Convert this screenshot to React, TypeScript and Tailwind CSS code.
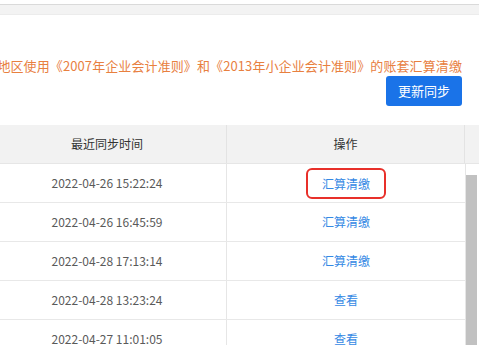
import React from "react";

const rows = [
  { time: "2022-04-26 15:22:24", action: "汇算清缴", marked: true },
  { time: "2022-04-26 16:45:59", action: "汇算清缴", marked: false },
  { time: "2022-04-28 17:13:14", action: "汇算清缴", marked: false },
  { time: "2022-04-28 13:23:24", action: "查看", marked: false },
  { time: "2022-04-27 11:01:05", action: "查看", marked: false },
];

export default function App() {
  return (
    <div
      className="w-[479px] h-[345px] overflow-hidden bg-white flex flex-col"
      style={{ fontFamily: '"Noto Sans CJK SC", "Noto Sans", sans-serif' }}
    >
      <div className="h-[4px] shrink-0 bg-white" />
      <div className="h-[11px] shrink-0 bg-[#f3f3f3] border-t border-[#dadada] border-b border-b-[#ececec]" />

      {/* notice */}
      <div className="flex flex-col shrink-0 pr-[17px]">
        <div className="mt-[42px] h-[18px] flex justify-end overflow-hidden whitespace-nowrap text-[13px] leading-[18px] tracking-[0.1px] text-[#e8803f]">
          <span>仅支持地区使用《2007年企业会计准则》和《2013年小企业会计准则》的账套汇算清缴</span>
        </div>
        <div className="flex justify-end mt-[1px]">
          <button className="w-[76px] h-[30px] rounded-[3px] bg-[#1a73e8] text-white text-[13px]">
            更新同步
          </button>
        </div>
      </div>

      {/* table */}
      <div className="mt-[19px] flex flex-col flex-1 min-h-0">
        <div className="flex h-[39px] shrink-0 bg-[#f2f2f2] border-b border-[#e6e6e6] text-[12px] text-[#333]">
          <div className="w-[227px] pr-[12px] flex items-center justify-center border-r border-[#e3e3e3]">最近同步时间</div>
          <div className="w-[238px] flex items-center justify-center border-r border-[#e3e3e3]">操作</div>
          <div className="w-[12px]" />
        </div>
        <div className="flex flex-1 min-h-0">
          <div className="w-[465px] flex flex-col">
            {rows.map((r) => (
              <div key={r.time} className="flex h-[39px] shrink-0 border-b border-[#e8e8e8] text-[12px]">
                <div className="w-[227px] pr-[12px] flex items-center justify-center border-r border-[#e6e6e6] text-[#5a5a5a]">
                  {r.time}
                </div>
                <div className="flex-1 flex items-center justify-center text-[#3589e4]">
                  {r.marked ? (
                    <span className="border-2 border-[#e8302a] rounded-[6px] px-[14px] py-[5px] leading-[17px]">
                      {r.action}
                    </span>
                  ) : (
                    <span>{r.action}</span>
                  )}
                </div>
              </div>
            ))}
          </div>
          <div className="w-[12px] flex flex-col border-l border-[#e6e6e6]">
            <div className="h-[11px] shrink-0 bg-white" />
            <div className="flex-1 bg-[#c1c1c1]" />
          </div>
        </div>
      </div>
    </div>
  );
}
